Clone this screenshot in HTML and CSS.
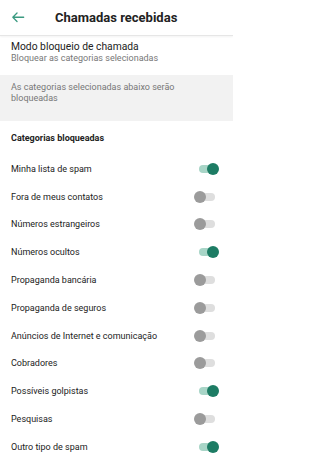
FILE: index.html
```html
<!DOCTYPE html>
<html lang="pt">
<head>
<meta charset="utf-8">
<link rel="stylesheet" href="styles.css">
</head>
<body>
<header class="appbar">
  <svg class="back" width="14.5" height="14.5" viewBox="0 0 24 24"><path d="M21 12H3M10 5l-7 7 7 7" fill="none" stroke="#3a9a80" stroke-width="2.1" stroke-linecap="round" stroke-linejoin="round"/></svg>
  <h1 class="title">Chamadas recebidas</h1>
</header>
<section class="mode">
  <div class="mode-title">Modo bloqueio de chamada</div>
  <div class="mode-sub">Bloquear as categorias selecionadas</div>
</section>
<section class="note">As categorias selecionadas abaixo serão bloqueadas</section>
<section class="cats">
  <div class="cats-head">Categorias bloqueadas</div>
  <div class="row"><span>Minha lista de spam</span><span class="sw on"></span></div>
  <div class="row"><span>Fora de meus contatos</span><span class="sw"></span></div>
  <div class="row"><span>Números estrangeiros</span><span class="sw"></span></div>
  <div class="row"><span>Números ocultos</span><span class="sw on"></span></div>
  <div class="row"><span>Propaganda bancária</span><span class="sw"></span></div>
  <div class="row"><span>Propaganda de seguros</span><span class="sw"></span></div>
  <div class="row"><span>Anúncios de Internet e comunicação</span><span class="sw"></span></div>
  <div class="row"><span>Cobradores</span><span class="sw"></span></div>
  <div class="row"><span>Possíveis golpistas</span><span class="sw on"></span></div>
  <div class="row"><span>Pesquisas</span><span class="sw"></span></div>
  <div class="row"><span>Outro tipo de spam</span><span class="sw on"></span></div>
</section>
</body>
</html>
```
FILE: styles.css
```css
* { box-sizing: border-box; }
html, body { margin: 0; padding: 0; background: #fff; }
body { font-family: Roboto, "Noto Sans", sans-serif; color: #222; width: 233px; overflow: hidden; }
.appbar {
  height: 36px; display: flex; align-items: center;
  border-bottom: 1px solid #e6e6e6;
  box-shadow: 0 1px 2px rgba(0,0,0,0.05);
}
.back { margin-left: 10.5px; flex: none; }
.title { margin: 0 0 0 30px; font-size: 13px; font-weight: 700; color: #222; }
.mode { height: 39px; padding: 4px 11px 0; }
.mode-title { font-size: 10.3px; line-height: 13px; color: #222; }
.mode-sub { font-size: 9px; line-height: 11px; color: #777; }
.note {
  height: 46px; background: #f2f2f2; padding: 7px 50px 0 11px;
  font-size: 9px; line-height: 10.5px; color: #777;
}
.cats-head { font-size: 9px; font-weight: 700; color: #222; padding: 12px 11px 0; height: 34px; line-height: 11px; }
.row {
  height: 27.8px; display: flex; align-items: center; justify-content: space-between;
  padding: 0 18px 0 11px; font-size: 9px; color: #222;
}
.sw { position: relative; width: 16px; height: 8px; border-radius: 4px; background: #dedede; }
.sw::after {
  content: ""; position: absolute; left: -5px; top: -2px; width: 12px; height: 12px;
  border-radius: 50%; background: #9b9b9b;
}
.sw.on { background: #a8d5c7; }
.sw.on::after { left: auto; right: -4px; background: #1d7c64; }
```
